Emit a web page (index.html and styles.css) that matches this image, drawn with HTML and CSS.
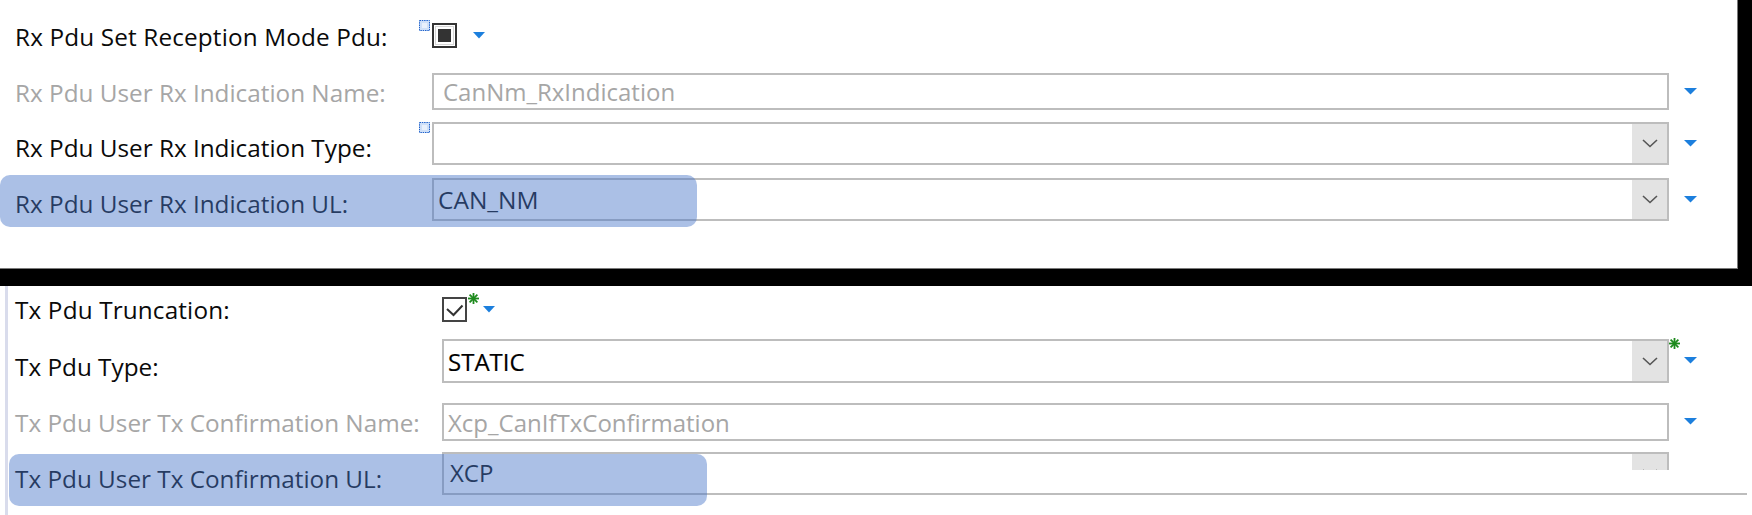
FILE: index.html
```html
<!DOCTYPE html>
<html lang="en">
<head>
  <meta charset="UTF-8">
  <title>CanIf Pdu Configuration</title>
  <link rel="stylesheet" href="styles.css">
</head>
<body>
  <div class="frame">
    <div class="panel panel-rx">
      <div class="row row-check">
        <div class="label">Rx Pdu Set Reception Mode Pdu:</div>
        <span class="marker">
          <svg width="11" height="11" viewBox="0 0 11 11"><rect x="0.5" y="0.5" width="10" height="10" fill="#cfe0f8" stroke="#1f62cc" stroke-dasharray="1.5 0.8"/><rect x="3" y="3" width="5" height="5" fill="#e9f1fc"/></svg>
        </span>
        <span class="checkbox">
          <svg width="25" height="25" viewBox="0 0 25 25"><rect x="1" y="1" width="23" height="23" fill="#fff" stroke="#333" stroke-width="2"/><rect x="3.5" y="3.5" width="18" height="18" fill="none" stroke="#d6d6d6"/><rect x="6" y="6" width="13" height="13" fill="#333"/></svg>
        </span>
        <span class="menu-arrow check-arrow">
          <svg width="12" height="7" viewBox="0 0 12 7"><path d="M0 0H12L6 6.5Z" fill="#1c7fdd"/></svg>
        </span>
      </div>

      <div class="row row-text">
        <div class="label disabled">Rx Pdu User Rx Indication Name:</div>
        <span class="marker"></span>
        <div class="field textbox">
          <span class="value disabled">CanNm_RxIndication</span>
        </div>
        <span class="menu-arrow">
          <svg width="13" height="7" viewBox="0 0 13 7"><path d="M0 0H13L6.5 6.5Z" fill="#1c7fdd"/></svg>
        </span>
      </div>

      <div class="row row-combo">
        <div class="label">Rx Pdu User Rx Indication Type:</div>
        <span class="marker marker-top">
          <svg width="11" height="11" viewBox="0 0 11 11"><rect x="0.5" y="0.5" width="10" height="10" fill="#cfe0f8" stroke="#1f62cc" stroke-dasharray="1.5 0.8"/><rect x="3" y="3" width="5" height="5" fill="#e9f1fc"/></svg>
        </span>
        <div class="field combo">
          <span class="value"></span>
          <span class="combo-btn">
            <svg width="16" height="9" viewBox="0 0 16 9"><path d="M1 1L8 7.5L15 1" fill="none" stroke="#555" stroke-width="1.6"/></svg>
          </span>
        </div>
        <span class="menu-arrow">
          <svg width="13" height="7" viewBox="0 0 13 7"><path d="M0 0H13L6.5 6.5Z" fill="#1c7fdd"/></svg>
        </span>
      </div>

      <div class="row row-combo">
        <div class="label">Rx Pdu User Rx Indication UL:</div>
        <span class="marker"></span>
        <div class="field combo">
          <span class="value value-big">CAN_NM</span>
          <span class="combo-btn">
            <svg width="16" height="9" viewBox="0 0 16 9"><path d="M1 1L8 7.5L15 1" fill="none" stroke="#555" stroke-width="1.6"/></svg>
          </span>
        </div>
        <span class="menu-arrow">
          <svg width="13" height="7" viewBox="0 0 13 7"><path d="M0 0H13L6.5 6.5Z" fill="#1c7fdd"/></svg>
        </span>
      </div>

      <div class="highlight highlight-rx"></div>
    </div>
  </div>

  <div class="panel panel-tx">
    <div class="row row-check">
      <div class="label">Tx Pdu Truncation:</div>
      <span class="checkbox">
        <svg width="25" height="25" viewBox="0 0 25 25"><rect x="1" y="1" width="23" height="23" fill="#fff" stroke="#444" stroke-width="2"/><path d="M5 12L11.5 18L20.5 8.5" fill="none" stroke="#333" stroke-width="2"/></svg>
      </span>
      <span class="changed changed-check">
        <svg width="11" height="11" viewBox="0 0 11 11"><g stroke="#1d8a1d" stroke-width="1.8"><path d="M5.5 0V11"/><path d="M0 5.5H11"/><path d="M1.6 1.6L9.4 9.4"/><path d="M9.4 1.6L1.6 9.4"/></g></svg>
      </span>
      <span class="menu-arrow">
        <svg width="12" height="7" viewBox="0 0 12 7"><path d="M0 0H12L6 6.5Z" fill="#1c7fdd"/></svg>
      </span>
    </div>

    <div class="row row-combo row-tall">
      <div class="label">Tx Pdu Type:</div>
      <div class="field combo">
        <span class="value value-strong">STATIC</span>
        <span class="combo-btn">
          <svg width="16" height="9" viewBox="0 0 16 9"><path d="M1 1L8 7.5L15 1" fill="none" stroke="#555" stroke-width="1.6"/></svg>
        </span>
      </div>
      <span class="changed">
        <svg width="11" height="11" viewBox="0 0 11 11"><g stroke="#1d8a1d" stroke-width="1.8"><path d="M5.5 0V11"/><path d="M0 5.5H11"/><path d="M1.6 1.6L9.4 9.4"/><path d="M9.4 1.6L1.6 9.4"/></g></svg>
      </span>
      <span class="menu-arrow">
        <svg width="13" height="7" viewBox="0 0 13 7"><path d="M0 0H13L6.5 6.5Z" fill="#1c7fdd"/></svg>
      </span>
    </div>

    <div class="row row-text row-text-tx">
      <div class="label disabled">Tx Pdu User Tx Confirmation Name:</div>
      <div class="field textbox">
        <span class="value disabled">Xcp_CanIfTxConfirmation</span>
      </div>
      <span class="changed"></span>
      <span class="menu-arrow">
        <svg width="13" height="7" viewBox="0 0 13 7"><path d="M0 0H13L6.5 6.5Z" fill="#1c7fdd"/></svg>
      </span>
    </div>

    <div class="row row-combo row-last">
      <div class="label">Tx Pdu User Tx Confirmation UL:</div>
      <div class="field combo">
        <span class="value">XCP</span>
        <span class="combo-btn">
          <svg width="16" height="9" viewBox="0 0 16 9"><path d="M1 1L8 7.5L15 1" fill="none" stroke="#555" stroke-width="1.6"/></svg>
        </span>
      </div>
      <span class="changed"></span>
      <span class="menu-arrow">
        <svg width="13" height="7" viewBox="0 0 13 7"><path d="M0 0H13L6.5 6.5Z" fill="#1c7fdd"/></svg>
      </span>
    </div>

    <div class="cut-mask"></div>
    <div class="highlight highlight-tx"></div>
  </div>
</body>
</html>
```

FILE: styles.css
```css
:root {
  --text: #0a0a0a;
  --text-disabled: #a6a6a6;
  --border: #bdbdbd;
  --button: #e3e3e3;
  --highlight: rgba(72, 118, 200, 0.46);
}

* {
  box-sizing: border-box;
}

body {
  margin: 0;
  width: 1752px;
  height: 515px;
  overflow: hidden;
  background-color: #FFFFFF;
  font-family: 'Open Sans', 'Noto Sans', sans-serif;
  color: var(--text);
}

/* top screenshot, framed in black */
.frame {
  height: 286px;
  border-right: 14px solid #000;
  border-bottom: 17px solid #000;
}

.panel {
  position: relative;
}

.panel-rx {
  height: 269px;
  padding: 23px 0 0 15px;
  border-bottom: 1px solid #7a7a7a;
  border-right: 1px solid #7a7a7a;
}

.panel-tx {
  height: 229px;
  margin-left: 5px;
  padding: 11px 0 0 7px;
  border-left: 3px solid #d9dcec;
}

.row {
  display: flex;
  align-items: flex-end;
}

.label {
  width: 404px;
  font-size: 24.3px;
  line-height: 33px;
  white-space: nowrap;
  margin-bottom: 1px;
}

.panel-tx .label {
  width: 427px;
}

.row-check .label {
  margin-bottom: -5px;
  letter-spacing: 0.15px;
}

.panel-tx .row-check .label {
  margin-bottom: -4px;
}

.row-text-tx .label {
  margin-bottom: 2px;
}

.row-tall .label,
.row-last .label {
  margin-bottom: 0;
}

.disabled {
  color: var(--text-disabled);
}

.marker {
  width: 13px;
  align-self: flex-start;
  display: flex;
  margin-top: -3px;
}

.marker-top {
  margin-top: 0;
}

.checkbox {
  display: flex;
  align-self: center;
}

.menu-arrow {
  display: flex;
  align-self: center;
  margin-left: 15px;
  margin-top: -1px;
}

.check-arrow {
  margin-left: 16px;
}

.changed {
  width: 15px;
  display: flex;
  align-self: flex-start;
  margin-top: -1px;
}

.changed + .menu-arrow {
  margin-left: 0;
}

.changed-check {
  width: 16px;
  margin-top: -4px;
  padding-left: 1px;
}

.panel-tx .row-check .menu-arrow {
  margin-left: 0;
}

/* rows */
.row-text {
  margin-top: 25px;
  height: 37px;
}

.row-combo {
  margin-top: 12px;
  height: 43px;
}

.row-combo + .row-combo {
  margin-top: 13px;
}

.row-check {
  height: 25px;
}

.panel-tx .row-tall {
  margin-top: 17px;
  height: 44px;
}

.panel-tx .row-text-tx {
  margin-top: 20px;
  height: 38px;
}

.panel-tx .row-last {
  margin-top: 11px;
}

.field {
  width: 1237px;
  height: 100%;
  display: flex;
  align-items: flex-end;
  border: 2px solid var(--border);
  background-color: #FFFFFF;
}

.panel-tx .field {
  width: 1227px;
}

.value {
  flex: 1;
  font-size: 24px;
  line-height: 33px;
  white-space: nowrap;
  padding-left: 7px;
}

.textbox .value {
  padding-left: 9px;
}

.panel-tx .textbox .value {
  padding-left: 4px;
}

.combo .value {
  padding-left: 4px;
  padding-bottom: 3px;
}

.row-last .value {
  padding-left: 6px;
  padding-bottom: 4px;
}

.value-big {
  font-size: 24.5px;
  padding-bottom: 4px;
}

.value-strong {
  color: #000;
  -webkit-text-stroke: 0.2px #000;
}

.combo-btn {
  width: 35px;
  height: 100%;
  display: flex;
  align-items: center;
  justify-content: center;
  background-color: var(--button);
}

/* selection overlays */
.highlight {
  position: absolute;
  height: 52px;
  border-radius: 10px;
  background-color: var(--highlight);
}

.highlight-rx {
  left: 0;
  top: 175px;
  width: 697px;
}

.highlight-tx {
  left: 1px;
  top: 168px;
  width: 698px;
}

/* lower edge of the screenshot is cut off */
.cut-mask {
  position: absolute;
  left: 1552px;
  top: 184px;
  width: 187px;
  height: 25px;
  background-color: #FFFFFF;
  border-bottom: 2px solid var(--border);
}
```
